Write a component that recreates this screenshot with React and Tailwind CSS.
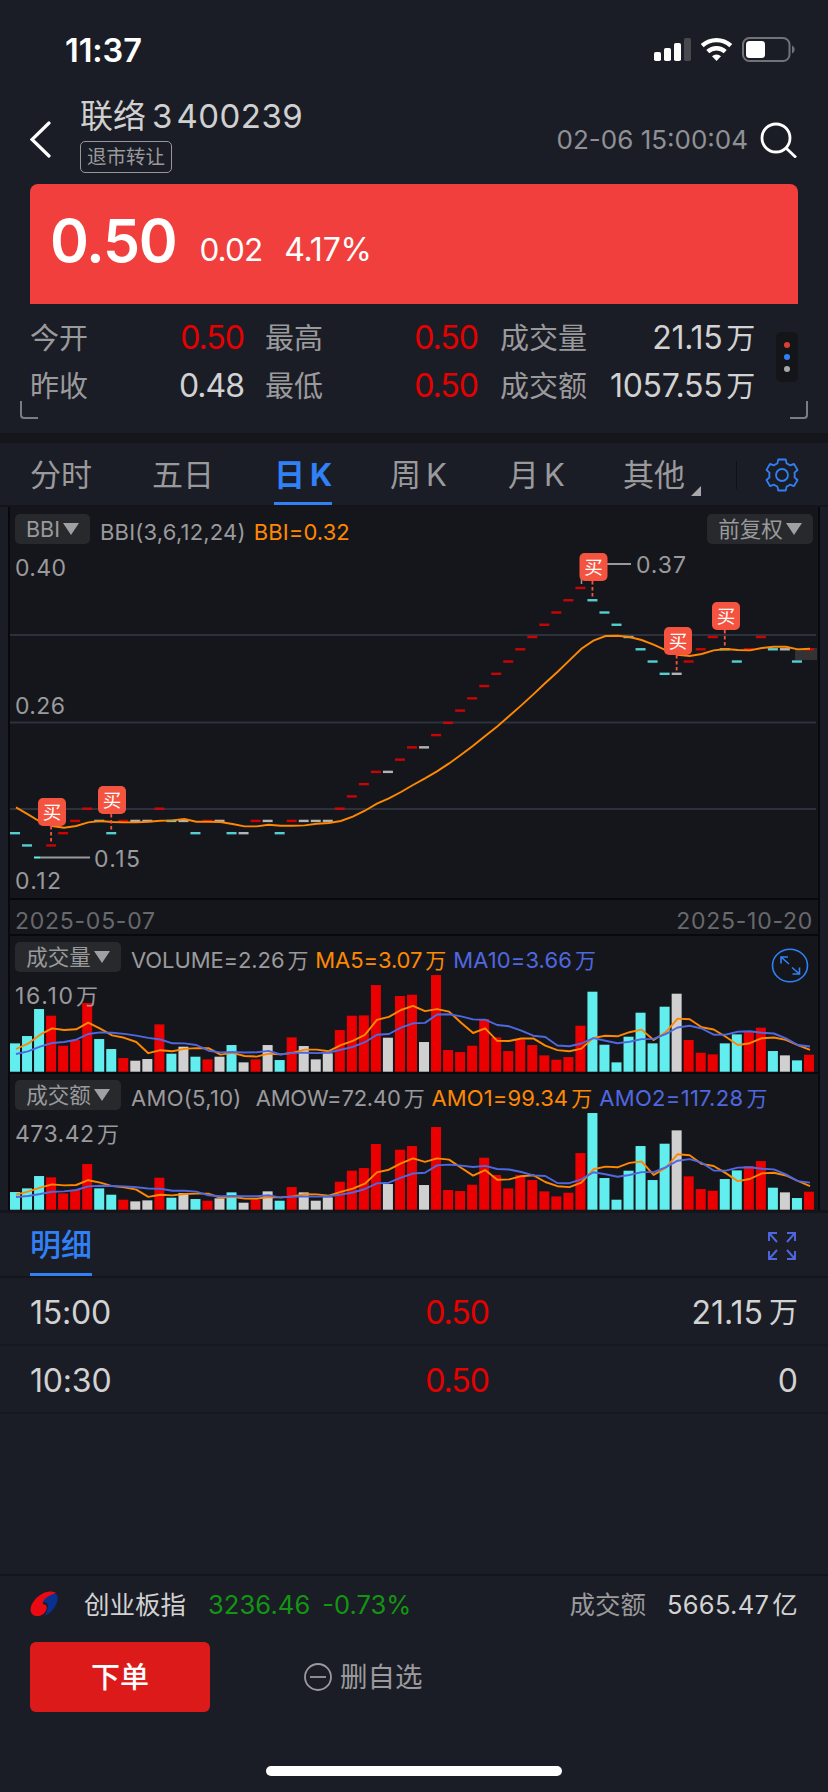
import clsx from 'clsx'

const STEP = 12.03
const UP = '#ea0000'
const DOWN = '#62eeee'
const FLAT = '#d0d0d0'
const ORANGE = '#ff8800'
const BLUE = '#4f68e0'

// r = up, d = down, f = flat
const DIRS =
  'dddrrrrddrffrdfdrfdfrfdrfffrrrrfrrfrrrrrrrrrrrrrdddddddfrrrddrrdfdr'

const PRICES = [
  17, 16, 15, 16, 17, 18, 19, 18, 17, 18, 18, 18, 19, 18, 18, 17, 18, 18, 17,
  17, 18, 18, 17, 18, 18, 18, 18, 19, 20, 21, 22, 22, 23, 24, 24, 25, 26, 27,
  28, 29, 30, 31, 32, 33, 34, 35, 36, 37, 36, 35, 34, 33, 32, 31, 30, 30, 31,
  32, 33, 32, 31, 32, 33, 32, 32, 31, 32
]

const BBI = [
  422, 443, 465, 478, 483, 478, 467, 463, 466, 467, 467, 465, 462, 461, 457,
  465, 465, 466, 472, 479, 479, 474, 477, 477, 476, 471, 469, 463, 450, 432,
  411, 395, 376, 355, 335, 314, 290, 264, 237, 208, 179, 148, 116, 83, 49, 16,
  -19, -54, -78, -92, -93, -89, -80, -66, -50, -36, -32, -38, -49, -53, -50,
  -49, -56, -60, -60, -52, -54
]

const VOLUME = [
  85, 107, 188, 168, 78, 95, 206, 98, 68, 41, 33, 38, 142, 54, 75, 45, 37, 45,
  80, 28, 37, 80, 35, 103, 77, 37, 55, 125, 168, 169, 260, 102, 227, 231, 89,
  290, 65, 59, 78, 158, 103, 62, 97, 80, 49, 36, 44, 138, 240, 81, 28, 105,
  177, 85, 195, 234, 95, 57, 52, 85, 112, 122, 132, 62, 49, 34, 51
]

const AMOUNT = [
  53, 64, 101, 97, 49, 59, 137, 64, 45, 30, 25, 28, 96, 36, 50, 32, 27, 34,
  52, 21, 29, 55, 27, 68, 52, 27, 37, 84, 117, 125, 197, 77, 180, 191, 74,
  248, 59, 56, 75, 156, 104, 64, 104, 89, 55, 40, 51, 170, 290, 95, 30, 117,
  191, 89, 198, 238, 100, 62, 57, 92, 118, 131, 146, 66, 52, 35, 54
]

const BUYS = [
  { i: 3, x: 28, y: 250 },
  { i: 8, x: 88, y: 238 },
  { i: 48, x: 569.5, y: 5 },
  { i: 55, x: 654, y: 79 },
  { i: 59, x: 702, y: 54 }
]

const TABS = [
  { label: '分时', w: 'w-[122px]' },
  { label: '五日', w: 'w-[122px]' },
  { label: '日', k: true, w: 'w-[116px]', active: true },
  { label: '周', k: true, w: 'w-[118px]' },
  { label: '月', k: true, w: 'w-[115px]' },
  { label: '其他', w: 'w-[113px]', more: true }
]

const colorAt = i => ({ r: UP, d: DOWN, f: FLAT })[DIRS[i]]
const priceY = p => 309.7 - (p - 15) * 12.26

function average(data, size, seed) {
  return data.map((_, i) => {
    if (i < seed.length) return seed[i]
    const part = data.slice(i - size + 1, i + 1)
    return part.reduce((a, b) => a + b, 0) / size
  })
}

const toPoints = (data, toY) =>
  data.map((v, i) => `${(6 + i * STEP).toFixed(1)},${toY(v).toFixed(1)}`).join(' ')

function Label({ x, y, w, children }) {
  return (
    <text x={x} y={y} fill="#9a9a9c" fontSize="23" textLength={w}>
      {children}
    </text>
  )
}

function Chip({ children, className }) {
  return (
    <div className={clsx(
      'h-[30px] rounded-[5px] bg-[#27292d] text-[#9a9a9c] text-[21.5px]',
      'flex items-center justify-center gap-[3px] shrink-0', className
    )}>
      <span className="leading-none pt-px">{children}</span>
      <svg width="16" height="12" viewBox="0 0 16 12">
        <path d="M0 0H16L8 12Z" fill="#a0a0a2"/>
      </svg>
    </div>
  )
}

function Wan({ children, className }) {
  return (
    <span className={className}>
      {children}<span className="ml-[3px] text-[21px]">万</span>
    </span>
  )
}

function StatusBar() {
  return (
    <div className="h-[96px] flex items-start justify-between pl-[65px] pr-[33px]">
      <span className="mt-[34px] text-[32.5px] leading-[34px] font-semibold
        text-white tracking-[-0.1px]">
        11:37
      </span>
      <svg className="mt-[34px]" width="142" height="32" viewBox="0 0 142 32">
        <g fill="#fff">
          <rect x="1" y="18" width="7" height="9" rx="1.8"/>
          <rect x="11" y="14" width="7" height="13" rx="1.8"/>
          <rect x="21" y="9" width="7" height="18" rx="1.8"/>
          <rect x="31" y="4" width="7" height="23" rx="1.8" fill="#48494e"/>
        </g>
        <g fill="none" stroke="#fff" strokeWidth="4.4">
          <path d="M49.2 11.6A21.5 21.5 0 0 1 77.8 11.6"/>
          <path d="M54.8 17.6A13 13 0 0 1 72.2 17.6"/>
        </g>
        <path d="M63.5 27L59 22.3A6.500 6.500 0 0 1 68 22.3Z" fill="#fff"/>
        <rect x="90" y="4" width="46.5" height="23" rx="6.5" fill="none"
          stroke="#717378" strokeWidth="2"/>
        <rect x="93" y="7" width="19" height="17" rx="3.5" fill="#fff"/>
        <path d="M139 11.5C142.5 13 142.5 18 139 19.5Z" fill="#717378"/>
      </svg>
    </div>
  )
}

function Header() {
  return (
    <div className="h-[88px] flex items-start px-[30px]">
      <svg className="mt-[24px] shrink-0" width="22" height="40" viewBox="0 0 22 40">
        <path d="M19 3L2 19.5L19 36" fill="none" stroke="#fff" strokeWidth="3.2"
          strokeLinecap="round"/>
      </svg>
      <div className="ml-[28px] flex-1">
        <div className="h-[45px] flex items-center text-[#d0d0d0] text-[33px]
          leading-[40px] pb-[5px]">
          <span>联络</span>
          <span className="ml-[6px]">3</span>
          <span className="ml-[4px] tracking-[0.5px]">400239</span>
        </div>
        <div className="w-[92px] h-[32px] border-[1.5px] border-[#96979a]
          rounded-[5px] flex items-center justify-center text-[19.5px]
          leading-none text-[#9a9a9c] pt-[2px]">
          退市转让
        </div>
      </div>
      <span className="mt-[28px] text-[26px] leading-[32px] text-[#909194]">
        02-06 15:00:04
      </span>
      <svg className="mt-[24px] ml-[12px] shrink-0" width="38" height="38" viewBox="0 0 38 38">
        <g fill="none" stroke="#fff" strokeWidth="2.8">
          <circle cx="16" cy="18" r="14"/>
          <path d="M26 28L36 37.5"/>
        </g>
      </svg>
    </div>
  )
}

function Quote() {
  return (
    <div className="mx-[30px] h-[120px] rounded-t-[8px] bg-[#f03f3d] text-white
      flex items-start pt-[19px] pl-[20px]">
      <span className="text-[59px] leading-[76px] font-semibold
        tracking-[-1.3px]">0.50</span>
      <span className="mt-[30px] ml-[23px] text-[31.5px] leading-[34px]
        tracking-[-0.9px]">0.02</span>
      <span className="mt-[30px] ml-[22px] text-[32px] leading-[34px]
        tracking-[-0.2px]">4.17%</span>
    </div>
  )
}

function Stats() {
  const rows = [
    [['今开', '0.50', true], ['最高', '0.50', true], ['成交量', '21.15']],
    [['昨收', '0.48', false], ['最低', '0.50', true], ['成交额', '1057.55']]
  ]
  return (
    <div className="h-[129px] relative pl-[30px] pr-[30px] pt-[10px] flex">
      <div className="w-[725px]">
        {rows.map((row, r) => (
          <div key={r} className="h-[48px] flex items-center text-[32px]
            leading-none">
            {row.map(([name, value, red], c) => (
              <div key={name} className={clsx(
                'flex items-center justify-between',
                c === 0 && 'w-[214px] tracking-[-1px]',
                c === 1 && 'w-[213px] ml-[21px] tracking-[-1px]',
                c === 2 && 'w-[255px] ml-[22px] tracking-[-0.3px]'
              )}>
                <span className="text-[29px] tracking-normal text-[#9a9a9c]">
                  {name}
                </span>
                <span className={clsx(
                  'flex items-center',
                  red ? 'text-[#e60000]' : 'text-[#d2d2d2]'
                )}>
                  {value}
                  {c === 2 && <span className="ml-[4px] text-[29px]">万</span>}
                </span>
              </div>
            ))}
          </div>
        ))}
      </div>
      <div className="ml-auto mt-[18px] w-[22px] h-[50px] rounded-[5px]
        bg-[#141519] flex flex-col items-center justify-center gap-[6px]">
        <i className="size-[6px] rounded-full bg-[#d8402f]"/>
        <i className="size-[6px] rounded-full bg-[#3080f6]"/>
        <i className="size-[6px] rounded-full bg-[#a8a8aa]"/>
      </div>
      <i className="absolute left-[20px] bottom-[14px] w-[18px] h-[18px]
        border-l-2 border-b-2 border-[#7b7c80] rounded-bl-[4px]"/>
      <i className="absolute right-[20px] bottom-[14px] w-[18px] h-[18px]
        border-r-2 border-b-2 border-[#7b7c80] rounded-br-[4px]"/>
    </div>
  )
}

function Gear() {
  return (
    <svg width="34" height="34" viewBox="0 0 34 34" fill="none"
      stroke="#3080f6" strokeWidth="1.8" strokeLinejoin="round">
      <path d="M13.3 1.5H20.7L21.6 5.4Q23.4 6 25 7.4L29 5.9L32.5 12
        L29.5 14.7Q30 17 29.5 19.3L32.5 22L29 28.1L25 26.6Q23.4 28 21.6 28.6
        L20.7 32.5H13.3L12.4 28.6Q10.6 28 9 26.6L5 28.1L1.5 22L4.5 19.3
        Q4 17 4.5 14.7L1.5 12L5 5.9L9 7.4Q10.6 6 12.4 5.4Z"/>
      <circle cx="17" cy="17" r="6"/>
    </svg>
  )
}

function Tabs() {
  return (
    <div className="h-[64px] border-b-2 border-[#14151a] bg-[#1b1d26] flex pl-[30px]
      text-[31px] leading-none text-[#9a9a9c]">
      {TABS.map(tab => (
        <div key={tab.label} className={clsx('h-[62px] flex', tab.w)}>
          <div className={clsx(
            'h-full flex items-center border-b-[3px] pt-[3px]',
            tab.active
              ? 'border-[#3080f6] text-[#3080f6] font-bold'
              : 'border-transparent'
          )}>
            {tab.label}
            {tab.k && <span className="ml-[5px] text-[31px]">K</span>}
          </div>
          {tab.more && (
            <svg className="mt-[43px] ml-[6px]" width="10" height="10">
              <path d="M10 0V10H0Z" fill="#a8a8aa"/>
            </svg>
          )}
        </div>
      ))}
      <i className="mt-[18px] w-px h-[28px] bg-[#101116]"/>
      <div className="ml-[28px] h-[64px] flex items-center">
        <Gear/>
      </div>
    </div>
  )
}

function PriceChart() {
  return (
    <svg className="block" width="808" height="350" viewBox="0 0 808 350">
      {[87, 174.5, 261].map(y => (
        <path key={y} d={`M0 ${y}H806`} stroke="#2d313d" strokeWidth="2"/>
      ))}
      <rect x="785" y="100" width="22" height="12" fill="#333335"/>
      {PRICES.map((p, i) => p > 15 && (
        <rect key={i} x={i * STEP} y={priceY(p) - 1.2} width="10" height="2.4"
          fill={colorAt(i)} opacity="0.85"/>
      ))}
      <polyline points={toPoints(BBI, v => v / 3 + 118.7)} fill="none"
        stroke={ORANGE} strokeWidth="1.9"/>
      <path d="M30 309.5H80M597 16H621" stroke="#9a9a9c" strokeWidth="2"/>
      <path d="M24 309.5H30" stroke={DOWN} strokeWidth="2"/>
      <path d="M571.5 30V36" stroke="#9a9a9c" strokeWidth="1.5"/>
      {BUYS.map(b => (
        <g key={b.i}>
          <path d={`M${5 + b.i * STEP} ${b.y + 28}V${priceY(PRICES[b.i]) - 2}`}
            stroke="#f4543f" strokeWidth="1.8" strokeDasharray="3.5 2.5"/>
          <rect x={b.x} y={b.y} width="28" height="28" rx="5" fill="#f4543f"/>
          <text x={b.x + 14} y={b.y + 21} fontSize="18.5" fill="#fff"
            textAnchor="middle">买</text>
        </g>
      ))}
      <Label x={5} y={28} w={51}>0.40</Label>
      <Label x={5} y={166} w={50}>0.26</Label>
      <Label x={5} y={341} w={46}>0.12</Label>
      <Label x={626} y={25} w={50}>0.37</Label>
      <Label x={84} y={319} w={46}>0.15</Label>
    </svg>
  )
}

function BarChart({ data, ma5, ma10, max, maxWidth }) {
  const y = v => 99.7 - v / 3
  return (
    <svg className="block" width="808" height="100" viewBox="0 0 808 100">
      {data.map((v, i) => (
        <rect key={i} x={i * STEP} y={y(v)} width="10" height={v / 3}
          fill={colorAt(i)}/>
      ))}
      <g fill="none" strokeWidth="1.9" strokeLinejoin="round">
        <polyline points={toPoints(average(data, 5, ma5), y)} stroke={ORANGE}/>
        <polyline points={toPoints(average(data, 10, ma10), y)} stroke={BLUE}/>
      </g>
      <Label x={5} y={32} w={maxWidth}>{max}</Label>
      <text x={maxWidth + 8} y="32" fill="#9a9a9c" fontSize="22">万</text>
    </svg>
  )
}

function Charts() {
  return (
    <div className="mx-[8px] border-x-2 border-[#08090d] bg-[#15161b]
      text-[22px] leading-none text-[#9a9a9c]">
      <div className="h-[41px] pt-[7px] pl-[5px] pr-[5px] flex items-start">
        <Chip className="w-[75px]">BBI</Chip>
        <div className="ml-[10px] mt-[7px] flex">
          <span className="tracking-[0.2px]">BBI(3,6,12,24)</span>
          <span className="ml-[8px] tracking-[0.1px] text-[#ff8800]">BBI=0.32</span>
        </div>
        <Chip className="w-[106px] ml-auto">前复权</Chip>
      </div>
      <PriceChart/>
      <div className="h-[38px] border-y-2 border-[#08090d] px-[5px] pt-[8px] flex
        items-center justify-between text-[23px] tracking-[0.75px] text-[#68696c]">
        <span>2025-05-07</span>
        <span>2025-10-20</span>
      </div>
      <div className="h-[36px] pt-[6px] pl-[5px] flex items-start">
        <Chip className="w-[106px]">成交量</Chip>
        <div className="ml-[10px] mt-[7px] flex">
          <Wan className="tracking-[-0.1px]">VOLUME=2.26</Wan>
          <Wan className="ml-[7px] tracking-[-0.1px] text-[#ff8800]">MA5=3.07</Wan>
          <Wan className="ml-[7px] tracking-[0.1px] text-[#4f68e0]">MA10=3.66</Wan>
        </div>
        <svg className="ml-auto mr-[9px] mt-[6px] shrink-0" width="38" height="35"
          viewBox="0 0 38 35" fill="none" stroke="#3080f6" strokeWidth="1.6">
          <ellipse cx="19" cy="17.5" rx="17.5" ry="16.3"/>
          <path d="M10 15.5V9H17M10 9L18 16M21 19.5L28.5 26M28.5 19.5V26H21.5"/>
        </svg>
      </div>
      <BarChart data={VOLUME} ma5={[68, 84, 111, 130]}
        ma10={[53, 61, 75, 86, 89, 96, 113, 118, 117]}
        max="16.10" maxWidth={58}/>
      <div className="h-[38px] border-t-2 border-[#08090d] pt-[6px] pl-[5px] flex
        items-start">
        <Chip className="w-[106px]">成交额</Chip>
        <div className="ml-[10px] mt-[7px] flex whitespace-nowrap">
          <span className="tracking-[0.3px]">AMO(5,10)</span>
          <Wan className="ml-[14px] tracking-[-0.2px]">AMOW=72.40</Wan>
          <Wan className="ml-[7px] tracking-[0.1px] text-[#ff8800]">AMO1=99.34</Wan>
          <Wan className="ml-[7px] tracking-[0.3px] text-[#4f68e0]">AMO2=117.28</Wan>
        </div>
      </div>
      <BarChart data={AMOUNT} ma5={[45, 54, 66, 76]}
        ma10={[38, 41, 47, 54, 55, 59, 70, 72, 71]}
        max="473.42" maxWidth={79}/>
    </div>
  )
}

function Details() {
  return (
    <div className="border-t-[3px] border-[#14151a] h-[364px]">
      <div className="h-[65px] border-b-2 border-[#14151a] px-[30px] flex
        items-start justify-between">
        <span className="h-[63px] flex items-center border-b-[3px] pt-[3px]
          border-[#3080f6] text-[#3080f6] text-[31px] leading-none font-medium">
          明细
        </span>
        <svg className="mt-[17px]" width="32" height="32" viewBox="0 0 32 32"
          fill="none" stroke="#4f68e0" strokeWidth="1.9">
          <path d="M3 11V3H11M3 3L11 12M21 3H29V11M29 3L21 12
            M3 21V29H11M3 29L11 20M21 29H29V21M29 29L21 20"/>
        </svg>
      </div>
      {[['15:00', '21.15'], ['10:30', '0']].map(([time, vol], i) => (
        <div key={time} className="h-[68px] border-b-2 border-[#17181e] px-[30px]
          pt-[3px] flex items-center text-[32px] leading-none text-[#d2d2d2]">
          <span className="w-[229px] tracking-[-0.2px]">{time}</span>
          <span className="w-[230px] text-right text-[#e60000]
            tracking-[-1px]">0.50</span>
          <span className="flex-1 flex items-center justify-end">
            {vol}{i === 0 && <span className="ml-[6px] text-[29px]">万</span>}
          </span>
        </div>
      ))}
    </div>
  )
}

function Footer() {
  return (
    <div className="h-[218px] border-t-2 border-[#14151a]">
      <div className="h-[56px] px-[30px] flex items-center text-[25.5px] leading-none">
        <svg width="28" height="26" viewBox="0 0 28 26">
          <path d="M15 25C24 21 31 8 26 3C21 1 12 7 13 12C18 10 20 14 15 25Z"
            fill="#0a318f"/>
          <path d="M26 2C20-2 8 2 2 13C-2 21 3 26 9 25C17 24 19 13 14 13.5
            C11 13 13 6 26 2Z" fill="#ea0a12"/>
        </svg>
        <span className="ml-[26px] pt-px text-[#d2d2d2]">创业板指</span>
        <span className="ml-[22px] pt-px tracking-[0.1px] text-[#129612]">3236.46</span>
        <span className="ml-[12px] pt-px text-[#129612]">-0.73%</span>
        <span className="ml-auto pt-px text-[#9a9a9c]">成交额</span>
        <span className="ml-[21px] pt-px tracking-[0.3px] text-[#d2d2d2]">
          5665.47<span className="ml-[3px]">亿</span>
        </span>
      </div>
      <div className="mt-[10px] pl-[30px] flex items-center">
        <button className="w-[180px] h-[70px] rounded-[6px] bg-[#dd1a1a]
          text-white text-[29px] font-medium pt-[2px]">
          下单
        </button>
        <svg className="ml-[94px]" width="28" height="28" viewBox="0 0 28 28"
          fill="none" stroke="#9a9a9c" strokeWidth="1.8">
          <circle cx="14" cy="14" r="13"/>
          <path d="M6 14H22"/>
        </svg>
        <span className="ml-[8px] pt-[2px] text-[27.5px] leading-none text-[#9a9a9c]">
          删自选
        </span>
      </div>
      <div className="mt-[54px] mx-auto w-[296px] h-[10px] rounded-full bg-white"/>
    </div>
  )
}

export default function App() {
  return (
    <div className="w-[828px] h-[1792px] overflow-hidden bg-[#1b1d26]
      font-['Inter','Noto_Sans_CJK_SC',sans-serif]">
      <StatusBar/>
      <Header/>
      <Quote/>
      <Stats/>
      <div className="h-[10px] bg-[#15161b]"/>
      <Tabs/>
      <Charts/>
      <Details/>
      <Footer/>
    </div>
  )
}
